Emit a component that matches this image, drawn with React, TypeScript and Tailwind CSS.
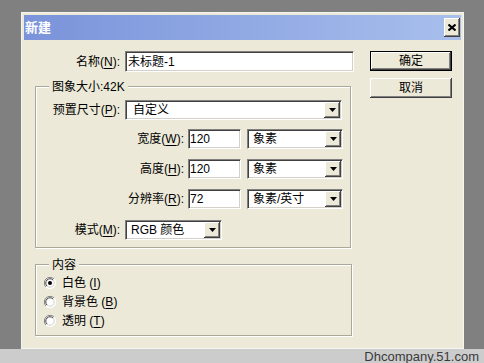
import React from 'react';

const sunken =
  'bg-white border border-t-[#808080] border-l-[#808080] border-r-white border-b-white shadow-[inset_1px_1px_0_#404040,inset_-1px_-1px_0_#d4d0c8]';
const raised =
  'bg-[#ece9d8] shadow-[inset_-1px_-1px_0_#404040,inset_1px_1px_0_#ffffff,inset_-2px_-2px_0_#808080,inset_2px_2px_0_#ece9d8]';

function Key({ c }: { c: string }) {
  return <span className="underline underline-offset-[2px]">{c}</span>;
}

function Arrow() {
  return (
    <svg width="7" height="4" viewBox="0 0 7 4">
      <path d="M0 0h7L3.5 4z" fill="#000" />
    </svg>
  );
}

interface ComboProps {
  value: string;
  width: string;
  pad?: string;
}

function Combo({ value, width, pad = 'pl-[5px]' }: ComboProps) {
  return (
    <div className={`${sunken} ${width} h-[20px] flex items-center`}>
      <span className={`flex-1 ${pad} leading-none whitespace-nowrap`}>{value}</span>
      <div className={`${raised} w-[16px] h-[16px] mr-[1px] flex items-center justify-center`}>
        <Arrow />
      </div>
    </div>
  );
}

function TextBox({ value, width, pad }: { value: string; width: string; pad: string }) {
  return (
    <div className={`${sunken} ${width} h-[21px] flex items-center ${pad} leading-none`}>
      {value}
    </div>
  );
}

function Radio({ checked }: { checked?: boolean }) {
  return (
    <svg width="12" height="12" viewBox="0 0 12 12">
      <circle cx="6" cy="6" r="5.5" fill="#ffffff" />
      <path d="M10 2A5.6 5.6 0 0 0 2 10" stroke="#808080" strokeWidth="1" fill="none" />
      <path d="M9 3A4.2 4.2 0 0 0 3 9" stroke="#404040" strokeWidth="1" fill="none" />
      <path d="M2 10A5.6 5.6 0 0 0 10 2" stroke="#ffffff" strokeWidth="1" fill="none" />
      <path d="M3 9A4.2 4.2 0 0 0 9 3" stroke="#d4d0c8" strokeWidth="1" fill="none" />
      {checked && <circle cx="6" cy="6" r="2" fill="#000" />}
    </svg>
  );
}

function GroupBox({
  title,
  width,
  height,
  className,
  children,
}: {
  title: string;
  width: string;
  height: string;
  className: string;
  children: React.ReactNode;
}) {
  return (
    <div
      className={`${width} ${height} ${className} flex flex-col border border-[#aca899] shadow-[inset_1px_1px_0_#ffffff,1px_1px_0_#ffffff]`}>
      <span className="-mt-[8px] ml-[13px] px-[3px] h-[16px] leading-[16px] self-start bg-[#ece9d8]">
        {title}
      </span>
      {children}
    </div>
  );
}

export default function App() {
  return (
    <div className="w-[484px] h-[363px] bg-[#808080] flex flex-col overflow-hidden text-[12px] text-black font-['Liberation_Sans','Noto_Sans_CJK_SC',sans-serif]">
      <div className="h-[349px] pt-[12px] pl-[21px]">
        <div className="w-[443px] h-[337px] bg-[#ece9d8] p-[3px] flex flex-col shadow-[inset_1px_1px_0_#f6f5f0,inset_-1px_-1px_0_#f6f5f0]">
          {/* title bar */}
          <div className="h-[25px] flex items-center justify-between pl-[1px] pr-[1px] bg-linear-to-r from-[#7a93da] to-[#a8bfec]">
            <span className="text-white font-bold text-[13px] leading-none">新建</span>
            <div className={`${raised} w-[16px] h-[19px] flex items-center justify-center`}>
              <svg width="8" height="7" viewBox="0 0 8 7">
                <path d="M0.5 0.5L7.5 6.5M7.5 0.5L0.5 6.5" stroke="#000" strokeWidth="2" />
              </svg>
            </div>
          </div>

          {/* body */}
          <div className="flex-1 flex">
            <div className="w-[330px] flex flex-col">
              <div className="mt-[11px] h-[21px] flex items-center">
                <span className="w-[96px] text-right">
                  名称(<Key c="N" />):
                </span>
                <div className="ml-[5px]">
                  <TextBox value="未标题-1" width="w-[229px]" pad="pl-[2px]" />
                </div>
              </div>

              <GroupBox title="图象大小:42K" width="w-[316px]" height="h-[162px]" className="ml-[11px] mt-[14px]">
                <div className="mt-[5px] h-[20px] flex items-center">
                  <span className="w-[84px] text-right whitespace-nowrap">
                    预置尺寸(<Key c="P" />):
                  </span>
                  <div className="ml-[5px]">
                    <Combo value="自定义" width="w-[217px]" pad="pl-[7px]" />
                  </div>
                </div>
                {[
                  { label: '宽度', key: 'W', value: '120', unit: '象素', mt: 'mt-[9px]' },
                  { label: '高度', key: 'H', value: '120', unit: '象素', mt: 'mt-[10px]' },
                  { label: '分辨率', key: 'R', value: '72', unit: '象素/英寸', mt: 'mt-[10px]' },
                ].map((row) => (
                  <div key={row.key} className={`${row.mt} h-[20px] flex items-center`}>
                    <span className="w-[148px] text-right whitespace-nowrap">
                      {row.label}(<Key c={row.key} />):
                    </span>
                    <div className="ml-[4px]">
                      <div className={`${sunken} w-[53px] h-[20px] pl-[1px] pt-[3px] leading-none`}>
                        {row.value}
                      </div>
                    </div>
                    <div className="ml-[6px]">
                      <Combo value={row.unit} width="w-[96px]" />
                    </div>
                  </div>
                ))}
                <div className="mt-[11px] h-[20px] flex items-center">
                  <span className="w-[84px] text-right whitespace-nowrap">
                    模式(<Key c="M" />):
                  </span>
                  <div className="ml-[5px]">
                    <Combo value="RGB 颜色" width="w-[97px]" />
                  </div>
                </div>
              </GroupBox>

              <GroupBox title="内容" width="w-[317px]" height="h-[72px]" className="ml-[11px] mt-[16px]">
                {[
                  { label: '白色', key: 'I', checked: true },
                  { label: '背景色', key: 'B' },
                  { label: '透明', key: 'T' },
                ].map((r) => (
                  <div key={r.key} className="h-[19px] flex items-center pl-[8px]">
                    <Radio checked={r.checked} />
                    <span className="ml-[6px] whitespace-nowrap">
                      {r.label} (<Key c={r.key} />)
                    </span>
                  </div>
                ))}
              </GroupBox>
            </div>

            <div className="ml-[16px] mt-[11px] flex flex-col">
              <div className="w-[82px] h-[20px] border border-black">
                <div className={`${raised} w-full h-full flex items-center justify-center leading-none`}>确定</div>
              </div>
              <div className={`${raised} mt-[7px] w-[82px] h-[20px] flex items-center justify-center leading-none`}>
                取消
              </div>
            </div>
          </div>
        </div>
      </div>
      <div className="h-[14px] bg-[#cccccc] flex items-center justify-end pr-[5px] text-[13px] leading-none text-[#3a3a3a]">
        Dhcompany.51.com
      </div>
    </div>
  );
}
